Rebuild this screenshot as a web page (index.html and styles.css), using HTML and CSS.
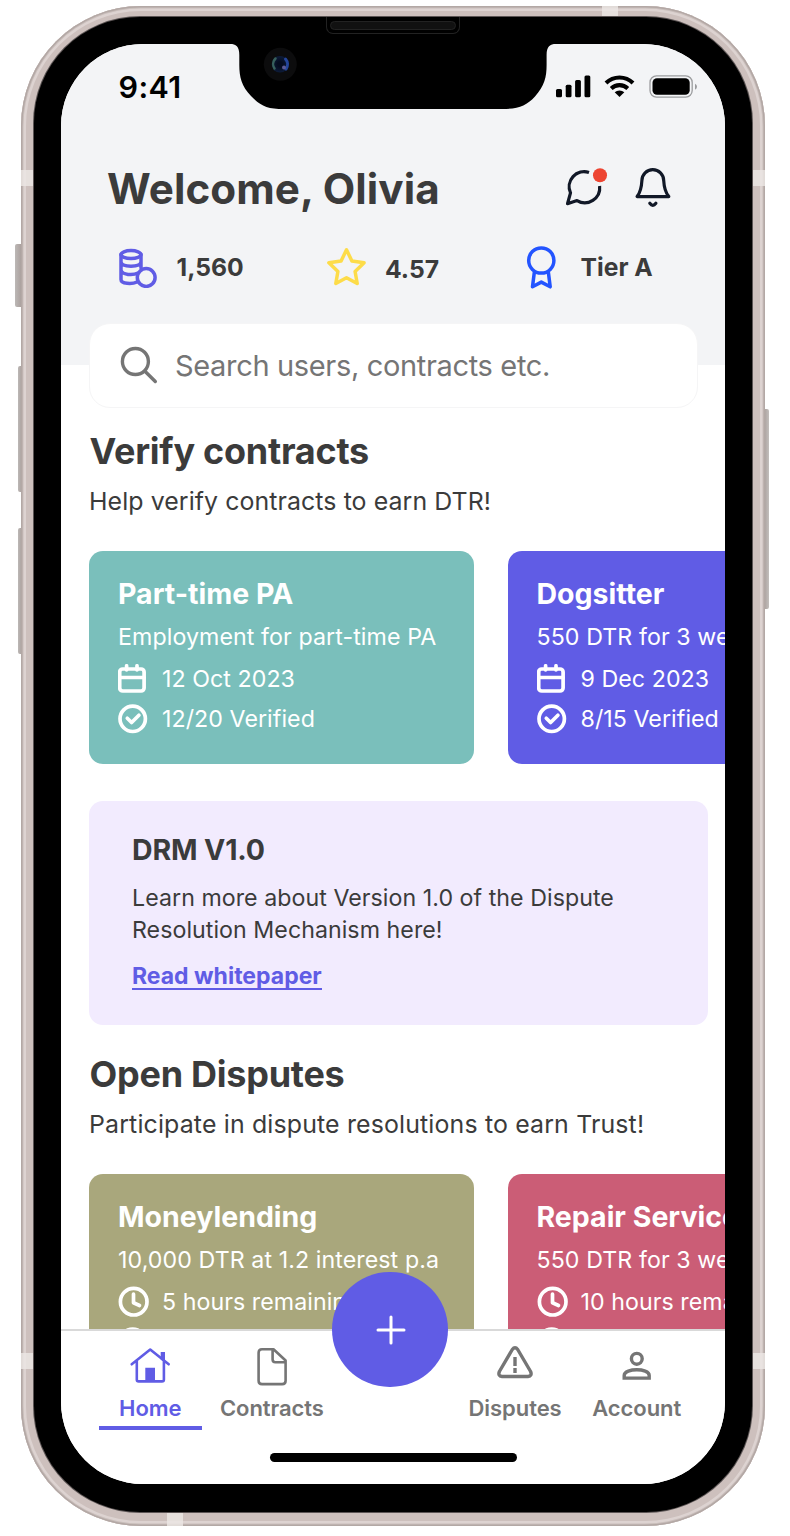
FILE: index.html
```html
<!DOCTYPE html>
<html lang="en">
<head>
<meta charset="utf-8">
<title>Home</title>
<link rel="stylesheet" href="styles.css">
</head>
<body>
<svg class="sprite" width="0" height="0">
  <symbol id="calendar" viewBox="0 0 30 30"><rect x="1.7" y="5" width="24.4" height="22" rx="3"/><path d="M2 13.5h24M8.6 1.8v4M19 1.8v4"/></symbol>
  <symbol id="check" viewBox="0 0 30 30"><circle cx="14.7" cy="14.8" r="12.7"/><path d="M9.3 14.3l4.3 4.2 7.3-7.2"/></symbol>
  <symbol id="clock" viewBox="0 0 32 32"><circle cx="15.7" cy="15.7" r="13.3"/><path d="M15.5 8v8.8l6 2.7"/></symbol>
  <radialGradient id="lens" cx="50%" cy="50%" r="50%"><stop offset=".3" stop-color="#050c20"/><stop offset="1" stop-color="#0d1c3a"/></radialGradient>
</svg>
<div class="phone">
  <i class="button mute"></i><i class="button vol-up"></i><i class="button vol-down"></i><i class="button power"></i>
  <div class="frame">
    <i class="band band-lt"></i><i class="band band-lb"></i><i class="band band-rt"></i><i class="band band-rb"></i><i class="band band-t"></i><i class="band band-b"></i>
    <div class="bezel">
      <div class="speaker"><i></i></div>
      <main class="screen">
        <header class="header">
          <div class="status">
            <span class="time">9:41</span>
            <svg width="142" height="24" viewBox="555 75 142 24">
              <path d="M556 90.500q0-1.500 1.500-1.500h3q1.500 0 1.500 1.500v5.300q0 1.500-1.500 1.500h-3q-1.500 0-1.500-1.500z"/>
              <rect x="565.700" y="84.700" width="5.800" height="12.600" rx="1.500"/><rect x="575.100" y="80" width="5.800" height="17.300" rx="1.500"/><rect x="584.500" y="75.600" width="5.800" height="21.700" rx="1.500"/>
              <path d="M606 82.900a19.500 19.500 0 0 1 27 0M611.200 88.400a12.200 12.200 0 0 1 16.600 0" fill="none" stroke="#000" stroke-width="4.100"/>
              <path d="M614.700 92.300a7.400 7.400 0 0 1 9.600 0l-4.800 4.800z"/>
              <rect x="650" y="75.900" width="42.200" height="21.200" rx="6.500" fill="none" stroke="#9b9c9e" stroke-width="1.300"/>
              <rect x="652.500" y="78.300" width="37.200" height="16.400" rx="4.500"/>
              <path d="M695 83.700q2 1 2 3t-2 3z" fill="#9b9c9e"/>
            </svg>
          </div>
          <div class="welcome">
            <h1>Welcome, Olivia</h1>
            <svg class="chat" width="44" height="42" viewBox="565.500 166.600 44 42"><path d="M589.500 172.100A15 15 0 0 0 571 192.500L568 203.300 577.500 200.200A15 15 0 0 0 600.100 185.600"/><circle cx="600.500" cy="174.800" r="7"/></svg>
            <svg class="bell" width="38" height="42" viewBox="634.500 167 38 42"><path d="M637.600 196.600H669.300C665.500 192 664.600 188 664.200 180.500A10.900 10.900 0 0 0 642.400 180.500C642 188 641.200 192 637.600 196.600ZM650.300 203.300Q653.300 207.300 656.400 203.300"/></svg>
          </div>
          <div class="stats">
            <svg class="coins" width="40" height="42" viewBox="118 246 40 42"><ellipse cx="131" cy="254.600" rx="10" ry="4"/><path d="M121 254.600V279.500C121 284 132 284.300 137 282M141 254.600V268M121 262C122 267.500 140 267.500 141 262M121 270C122 275.200 133 275.500 138 273"/><circle cx="146.200" cy="277.500" r="8.900"/></svg>
            <b class="points">1,560</b>
            <svg class="star" width="41" height="40" viewBox="0 0 41 40"><path d="M20.500 2.800l5.400 11.200 12.200 1.800-9 8.700 2.100 12-10.700-5.700-10.700 5.700 2.100-12-9-8.700 12.200-1.800z"/></svg>
            <b class="rating">4.57</b>
            <svg class="medal" width="32" height="44" viewBox="526 244.500 32 44"><circle cx="541.300" cy="260" r="12.600"/><path d="M534.300 272L532.500 286.300 541.300 281.600 550.200 286.300 548.400 272"/></svg>
            <b>Tier A</b>
          </div>
        </header>
        <div class="search">
          <svg width="38" height="38" viewBox="120 345.500 38 38"><circle cx="135.400" cy="361" r="13"/><path d="M145.200 371L155.300 381"/></svg>
          <span>Search users, contracts etc.</span>
        </div>
        <section class="section">
          <h2>Verify contracts</h2>
          <p class="sub">Help verify contracts to earn DTR!</p>
          <div class="cards">
            <article class="card teal"><h3>Part-time PA</h3><p>Employment for part-time PA</p>
              <div class="meta date"><svg width="30" height="30"><use href="#calendar"/></svg>12 Oct 2023</div>
              <div class="meta"><svg width="30" height="30"><use href="#check"/></svg>12/20 Verified</div></article>
            <article class="card violet"><h3>Dogsitter</h3><p>550 DTR for 3 weeks</p>
              <div class="meta date"><svg width="30" height="30"><use href="#calendar"/></svg>9 Dec 2023</div>
              <div class="meta"><svg width="30" height="30"><use href="#check"/></svg>8/15 Verified</div></article>
          </div>
        </section>
        <section class="promo">
          <h3>DRM V1.0</h3>
          <p>Learn more about Version 1.0 of the Dispute<br>Resolution Mechanism here!</p>
          <a>Read whitepaper</a>
        </section>
        <section class="section disputes">
          <h2>Open Disputes</h2>
          <p class="sub">Participate in dispute resolutions to earn Trust!</p>
          <div class="cards">
            <article class="card olive"><h3>Moneylending</h3><p>10,000 DTR at 1.2 interest p.a</p>
              <div class="meta time-left"><svg width="32" height="32"><use href="#clock"/></svg>5 hours remaining</div>
              <div class="meta"><svg width="30" height="30"><use href="#check"/></svg></div></article>
            <article class="card rose"><h3>Repair Services</h3><p>550 DTR for 3 weeks</p>
              <div class="meta time-left"><svg width="32" height="32"><use href="#clock"/></svg>10 hours remaining</div>
              <div class="meta"><svg width="30" height="30"><use href="#check"/></svg></div></article>
          </div>
        </section>
        <nav class="nav">
          <div class="tabs">
            <div class="tab active"><svg width="42" height="42" viewBox="129 1345 42 42"><path d="M131.700 1364.300L150.200 1349.600 168.700 1364.300M136.800 1361V1379.500Q136.800 1381.400 138.700 1381.400H162Q163.900 1381.400 163.900 1379.500V1361"/><path class="solid" d="M160.700 1352H165V1363L160.700 1359.500ZM145.300 1367.800H155V1382H145.300Z"/></svg><span>Home</span></div>
            <div class="tab"><svg width="42" height="42" viewBox="251 1345 42 42"><path d="M273.500 1349.300H262Q258.600 1349.300 258.600 1352.700V1380.700Q258.600 1384.100 262 1384.100H282.200Q285.600 1384.100 285.600 1380.700V1360.500ZM272.600 1349.300V1359.500Q272.600 1362.200 275.300 1362.200H285.600"/></svg><span>Contracts</span></div>
            <div class="tab"></div>
            <div class="tab"><svg class="heavy" width="42" height="42" viewBox="494 1345 42 42"><path d="M512.300 1349.500Q515 1346 517.700 1349.500L530.600 1371.500Q532.400 1376 528 1376.500H502Q497.600 1376 499.400 1371.500Z"/><path d="M515 1357V1366M515 1368V1373" stroke-width="3.400" stroke-linecap="butt"/></svg><span>Disputes</span></div>
            <div class="tab"><svg class="heavy person" width="42" height="42" viewBox="616 1345 42 42"><circle cx="636.800" cy="1358.800" r="5.400"/><path d="M624.200 1378.100V1375.400C624.200 1371.500 631 1369.800 636.800 1369.800S649.200 1371.500 649.200 1375.400V1378.100Z"/></svg><span>Account</span></div>
          </div>
          <div class="fab"><svg width="30" height="30" viewBox="0 0 30 30"><path d="M15 2v26M2 15h26"/></svg></div>
          <i class="home-bar"></i>
        </nav>
      </main>
      <svg class="notch" width="326" height="68" viewBox="230 42 326 68"><path d="M230 42V44C236 44 239.300 46.500 239.300 55V65C239.300 77 241.500 86 251 96C261 106 267 109 284 109H502C519 109 526 106 535 96.500C544.500 86 546.600 77 546.600 65V55C546.600 46.500 550 44 556 44V42Z"/><circle cx="280.300" cy="64.300" r="16.500" fill="#0c0c0d"/><circle cx="280" cy="64.300" r="8.300" fill="url(#lens)"/><path d="M275.500 58.500a8 8 0 0 0-1 10" fill="none" stroke="#37605c" stroke-width="2.500"/><path d="M285.500 59a8 8 0 0 1 .5 10" fill="none" stroke="#24459a" stroke-width="3"/><circle cx="284" cy="67.500" r="2" fill="#5c5a96"/></svg>
    </div>
  </div>
</div>
</body>
</html>
```
FILE: styles.css
```css
* { box-sizing: border-box; margin: 0; }
body { background: #fff; font-family: Inter, "Liberation Sans", sans-serif; color: #3b3b3b; overflow: hidden; }
.sprite { display: block; position: absolute; }
svg { fill: none; stroke-linecap: round; stroke-linejoin: round; flex: none; display: block; }
.phone { position: relative; width: 790px; height: 1536px; padding: 6px 0 0 21px; }
.button { position: absolute; background: linear-gradient(90deg, #bcb8b6, #a69a97); border-radius: 2px; }
.mute { left: 15px; top: 244px; width: 8px; height: 63px; }
.vol-up { left: 18px; top: 366px; width: 5px; height: 126px; }
.vol-down { left: 18px; top: 528px; width: 5px; height: 126px; }
.power { left: 762px; top: 409px; width: 7px; height: 200px; background: linear-gradient(90deg, #a0938f, #c3bfbd); }
.frame { position: relative; width: 743.500px; height: 1520px; padding: 11px 12.500px 14px 13px; border-radius: 120px; background: #cdc0bd; box-shadow: inset 0 0 0 1.500px #b3a8a5, inset 0 0 0 2.500px #c9bebb, inset 0 0 0 5px #ddd3d1; }
.band { position: absolute; background: rgba(236, 231, 229, .8); }
.band-lt, .band-lb { left: 0; width: 13px; height: 16px; }
.band-rt, .band-rb { right: 0; width: 13px; height: 16px; }
.band-lt, .band-rt { top: 164px; }
.band-lb, .band-rb { top: 1347px; }
.band-t { left: 581px; top: 0; width: 16px; height: 11px; }
.band-b { left: 146px; bottom: 0; width: 16px; height: 14px; }
.bezel { position: relative; height: 1495px; padding: 27px 27px 28px; border-radius: 106px; background: #000; box-shadow: 0 0 0 1px #5c5555; }
.speaker { position: absolute; left: 292px; top: 0; width: 134px; height: 17px; padding: 4px 3px; border: 1px solid #222; border-top: 0; border-radius: 0 0 7px 7px; }
.speaker i { display: block; height: 9px; border: 1px solid #222; border-radius: 5px; background: #111; }
.notch { position: absolute; left: 196px; top: 25px; fill: #000; }
.screen { position: relative; width: 664px; height: 1440px; overflow: hidden; background: #fff; border-radius: 82px; }

.header { height: 320.500px; background: #f3f4f6; }
.status { height: 86px; padding: 0 28px 0 57.500px; display: flex; align-items: center; justify-content: space-between; }
.status svg { fill: #000; stroke-linecap: butt; }
.time { padding-bottom: 2px; color: #000; font-size: 30.500px; font-weight: 600; letter-spacing: .4px; }
.welcome { display: flex; height: 60px; margin-top: 28px; padding-left: 46px; align-items: center; }
h1 { width: 458px; font-size: 42.200px; line-height: 60px; padding-top: 1px; letter-spacing: .05px; white-space: nowrap; }
.welcome svg { stroke: #111827; stroke-width: 3.200px; }
.chat { margin-right: 25px; stroke-linecap: butt !important; }
.chat circle { fill: #ed4532; stroke: none; }
.stats { display: flex; height: 50px; margin-top: 24px; padding-left: 57px; align-items: center; font-size: 24.700px; line-height: 50px; }
.stats svg { stroke-width: 3.500px; }
.coins { stroke: #605ce5; margin-right: 18.500px; }
.star { stroke: #fddc49; margin-right: 18px; }
.medal { stroke: #2354ff; margin-right: 22.500px; }
.points { width: 149.500px; }
.rating { width: 141px; padding-top: 3px; }
.search { position: relative; display: flex; align-items: center; width: 609px; height: 85.500px; margin: -42px 0 0 28px; padding-left: 31px; gap: 17px; background: #fff; border: 1px solid #f5f5f6; border-radius: 21px; color: #757575; font-size: 29px; letter-spacing: -.34px; }
.search svg { stroke: #757575; stroke-width: 3.400px; margin-left: -1px; }

.section { padding-left: 28px; }
h2 { margin-top: 20px; padding-left: .5px; font-size: 36px; line-height: 46px; letter-spacing: -.25px; white-space: nowrap; }
.sub { margin-top: 12px; font-size: 24.900px; line-height: 30px; letter-spacing: .08px; white-space: nowrap; }
.disputes .sub { letter-spacing: .15px; }
.cards { display: grid; grid-template-columns: 385px 385px; gap: 34px; margin-top: 35px; }
.card { height: 213px; padding: 25px 0 0 29px; border-radius: 14px; color: #fff; white-space: nowrap; }
.card h3 { font-size: 28.500px; line-height: 36px; }
.card p { margin-top: 10px; font-size: 23.200px; line-height: 30px; letter-spacing: .08px; }
.card svg { stroke: #fff; stroke-width: 3.700px; }
.meta { display: flex; align-items: center; height: 30px; gap: 14px; font-size: 23.200px; letter-spacing: .05px; }
.date { margin: 12px 0 10px; }
.time-left { height: 32px; margin: 11px 0 9px; gap: 12px; }
.teal { background: #7abfbb; }
.violet { background: #605ce5; }
.violet, .rose { padding-left: 28.500px; }
.olive { background: #a9a77c; }
.rose { background: #cb5d76; }
.promo { width: 619px; height: 223.500px; margin: 37px 0 0 28px; padding: 31px 43px; border-radius: 14px; background: #f2ebfe; font-size: 23px; line-height: 32px; }
.promo h3 { font-size: 28.500px; line-height: 36px; letter-spacing: -.15px; }
.promo p { margin-top: 14px; font-size: 23.200px; letter-spacing: .04px; white-space: nowrap; }
.promo a { display: inline-block; margin-top: 16px; line-height: 28px; height: 28px; border-bottom: 2px solid #605ce5; color: #605ce5; font-weight: 700; }
.disputes { padding-top: 6px; }
.disputes .cards { margin-top: 35.500px; }

.nav { position: absolute; left: 0; bottom: 0; width: 664px; height: 155px; background: #fff; border-top: 2px solid #d9d9d9; }
.tabs { display: grid; grid-template-columns: repeat(5, 121.600px); padding: 14px 0 0 28.500px; }
.tab { display: flex; flex-direction: column; align-items: center; color: #757575; font-size: 22px; font-weight: 600; line-height: 30px; letter-spacing: -.05px; }
.tab span { display: block; margin-top: 6px; }
.tab svg { stroke: currentColor; stroke-width: 2.600px; }
.tab .heavy { stroke-width: 3.400px; }
.tab .person { stroke-linejoin: miter; }
.active { color: #605ce5; }
.active::after { content: ""; width: 103px; height: 3.500px; margin-top: 3px; background: #605ce5; }
.solid { fill: #605ce5; stroke: none; }
.fab { position: absolute; left: 271px; top: -59.500px; width: 115.500px; height: 115.500px; border-radius: 50%; background: #605ce5; display: grid; place-items: center; padding: 2px 0 0 2px; }
.fab svg { stroke: #fff; stroke-width: 3px; }
.home-bar { position: absolute; left: 209px; bottom: 22px; width: 247px; height: 9px; border-radius: 5px; background: #000; }
```
